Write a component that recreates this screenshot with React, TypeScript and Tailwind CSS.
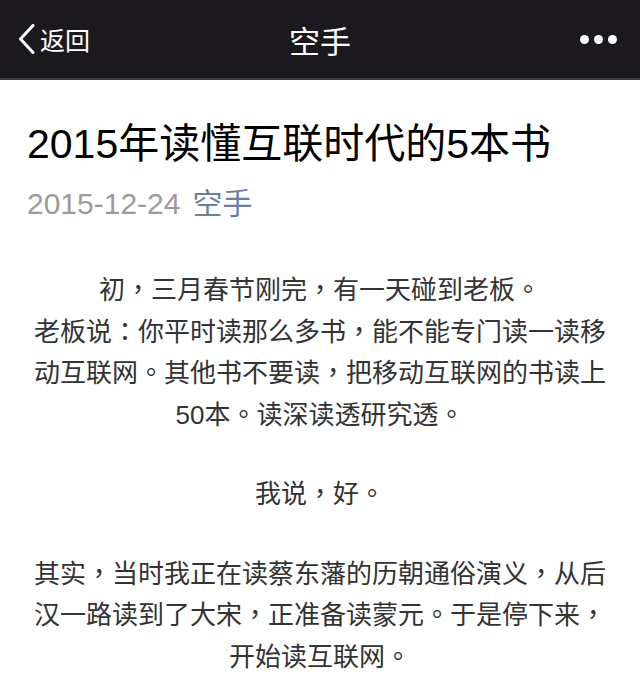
import React from "react";

const P = ({ text }: { text: string }) => {
  const parts = text.split(/([，。：])/);
  return (
    <>
      {parts.map((p, i) =>
        /[，。：]/.test(p) ? (
          <span key={i} className="leading-[0]" style={{ fontFamily: '"Noto Sans CJK TC", sans-serif' }}>
            {p}
          </span>
        ) : (
          <React.Fragment key={i}>{p}</React.Fragment>
        )
      )}
    </>
  );
};

const Line = ({ t }: { t: string }) => (
  <div className="whitespace-nowrap h-[41.5px]">
    <P text={t} />
  </div>
);

export default function App() {
  return (
    <div
      className="w-[640px] h-[687px] overflow-hidden bg-white"
      style={{ fontFamily: '"Liberation Sans", "Noto Sans CJK SC", sans-serif' }}
    >
      <div className="h-[78px] bg-[#1b191d] flex items-center justify-between px-[18px] relative">
        <div className="flex items-center gap-[5px] text-white">
          <svg width="17" height="30" viewBox="0 0 17 30">
            <path d="M15 1.5 L2.5 15 L15 28.5" fill="none" stroke="#fff" strokeWidth="3" strokeLinecap="round" strokeLinejoin="round" />
          </svg>
          <span className="text-[25px] leading-none" style={{ fontFamily: '"Noto Sans CJK SC", sans-serif' }}>返回</span>
        </div>
        <div
          className="absolute left-0 right-0 text-center text-white text-[31px] leading-none pointer-events-none"
          style={{ fontFamily: '"Noto Sans CJK SC", sans-serif' }}
        >
          空手
        </div>
        <div className="flex items-center gap-[5px] pr-[5px]">
          <div className="w-[9px] h-[9px] rounded-full bg-white" />
          <div className="w-[9px] h-[9px] rounded-full bg-white" />
          <div className="w-[9px] h-[9px] rounded-full bg-white" />
        </div>
      </div>
      <div className="h-[2px] bg-[#3d3d3f]" />
      <div className="px-[27px] pt-[38px]">
        <div className="text-[41px] leading-[52px] text-black whitespace-nowrap">2015年读懂互联时代的5本书</div>
        <div className="mt-[16px] text-[30px] leading-[36px] flex gap-[12px]">
          <span className="text-[#9b9b9b]">2015-12-24</span>
          <span className="text-[#6b7fa8]">空手</span>
        </div>
      </div>
      <div className="mt-[48px] text-center text-[26px] leading-[41.5px] text-[#333]">
        <Line t="初，三月春节刚完，有一天碰到老板。" />
        <Line t="老板说：你平时读那么多书，能不能专门读一读移" />
        <Line t="动互联网。其他书不要读，把移动互联网的书读上" />
        <Line t="50本。读深读透研究透。" />
        <div className="h-[38px]" />
        <Line t="我说，好。" />
        <div className="h-[38px]" />
        <Line t="其实，当时我正在读蔡东藩的历朝通俗演义，从后" />
        <Line t="汉一路读到了大宋，正准备读蒙元。于是停下来，" />
        <Line t="开始读互联网。" />
      </div>
    </div>
  );
}
